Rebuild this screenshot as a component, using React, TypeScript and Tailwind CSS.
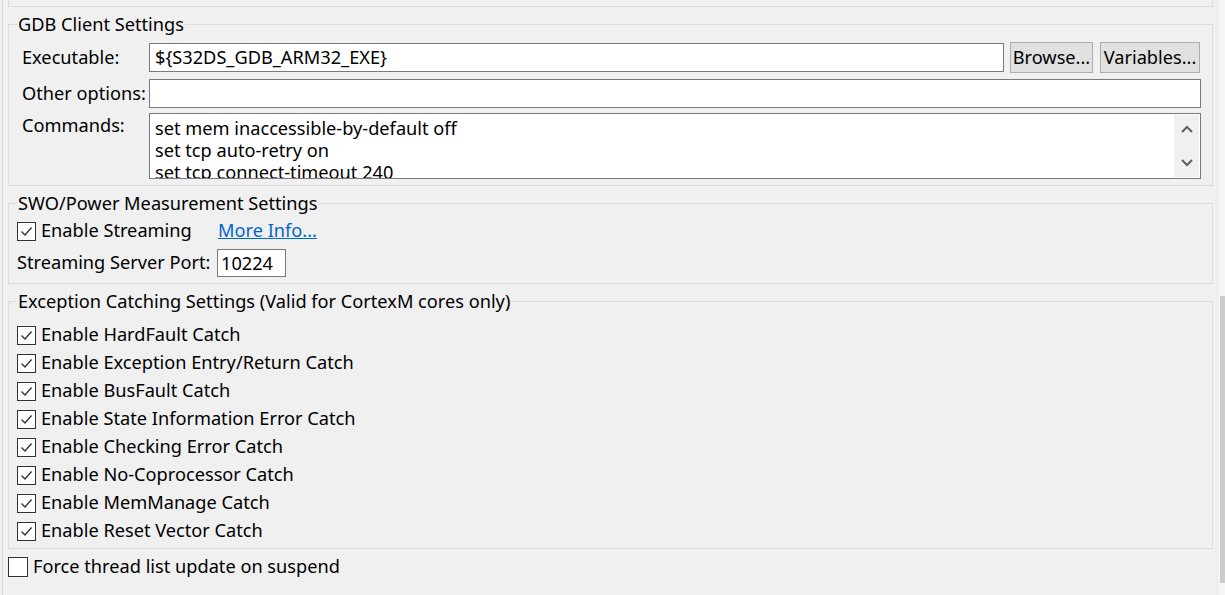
import React from "react";

const font = { fontFamily: '"Noto Sans", "Open Sans", sans-serif' };

function Check({ checked, size = "w-[19px] h-[19px]" }: { checked: boolean; size?: string }) {
  return (
    <span className={`${size} shrink-0 border border-[#333333] bg-white flex items-center justify-center`}>
      {checked && (
        <svg width="13" height="11" viewBox="0 0 13 11" fill="none">
          <path d="M1.5 5.5 L5 9 L11.5 1.5" stroke="#333333" strokeWidth="1.4" />
        </svg>
      )}
    </span>
  );
}

function Group({ title, children, className }: { title: string; children: React.ReactNode; className?: string }) {
  return (
    <fieldset className={`border border-[#dcdcdc] px-[8px] ${className ?? ""}`}>
      <legend className="px-[1px] h-[22px] leading-[22px] text-black">{title}</legend>
      {children}
    </fieldset>
  );
}

const catches = [
  "Enable HardFault Catch",
  "Enable Exception Entry/Return Catch",
  "Enable BusFault Catch",
  "Enable State Information Error Catch",
  "Enable Checking Error Catch",
  "Enable No-Coprocessor Catch",
  "Enable MemManage Catch",
  "Enable Reset Vector Catch",
];

export default function App() {
  return (
    <div className="w-[1225px] h-[595px] overflow-hidden bg-[#f0f0f0] flex text-[18.2px] text-black" style={font}>
      <div className="w-[2px] shrink-0" />
      <div className="w-[1px] shrink-0 bg-[#d9d9d9]" />
      <div className="flex-1 flex flex-col pl-[5px] pr-[6px]">
        <div className="h-[7px] border-x border-b border-[#dcdcdc]" />

        <Group title="GDB Client Settings" className="mt-[6px] pb-[6px]">
          <div className="flex flex-col pt-[7px]">
            <div className="flex items-center h-[31px]">
              <span className="w-[132px] pl-[5px]">Executable:</span>
              <div className="flex-1 h-[29px] border border-[#7a7a7a] bg-white flex items-center px-[5px] leading-none">
                {"${S32DS_GDB_ARM32_EXE}"}
              </div>
              <button className="ml-[6px] w-[83px] h-[31px] bg-[#e1e1e1] border border-[#adadad] text-black leading-none">Browse...</button>
              <button className="ml-[7px] mr-[4px] w-[100px] h-[31px] bg-[#e1e1e1] border border-[#adadad] text-black leading-none">Variables...</button>
            </div>
            <div className="flex items-center h-[29px] mt-[6px]">
              <span className="w-[132px] pl-[5px]">Other options:</span>
              <div className="flex-1 mr-[3px] h-[29px] border border-[#7a7a7a] bg-white" />
            </div>
            <div className="flex h-[66px] mt-[5px]">
              <span className="w-[132px] pl-[5px] leading-[22px] pt-[1px]">Commands:</span>
              <div className="flex-1 mr-[3px] h-[66px] border border-[#7a7a7a] bg-white flex overflow-hidden">
                <div className="flex-1 pl-[5px] pt-[3px] leading-[22px] whitespace-nowrap">
                  <div>set mem inaccessible-by-default off</div>
                  <div>set tcp auto-retry on</div>
                  <div>set tcp connect-timeout 240</div>
                </div>
                <div className="w-[25px] mt-[1px] mb-[1px] mr-[1px] bg-[#f0f0f0] flex flex-col items-center justify-between py-[10px]">
                  <svg width="12" height="8" viewBox="0 0 12 8">
                    <path d="M1 7 L6 2 L11 7" stroke="#606060" strokeWidth="2" fill="none" />
                  </svg>
                  <svg width="12" height="8" viewBox="0 0 12 8">
                    <path d="M1 1 L6 6 L11 1" stroke="#606060" strokeWidth="2" fill="none" />
                  </svg>
                </div>
              </div>
            </div>
          </div>
        </Group>

        <Group title="SWO/Power Measurement Settings" className="mt-[6px] pb-[6px]">
          <div className="flex items-center h-[28px] mt-[3px]">
            <Check checked />
            <span className="ml-[5px] w-[177px]">Enable Streaming</span>
            <span className="text-[#0066cc] underline">More Info...</span>
          </div>
          <div className="flex items-center h-[28px] mt-[4px]">
            <span className="w-[200px]">Streaming Server Port:</span>
            <div className="w-[69px] h-[28px] border border-[#7a7a7a] bg-white flex items-center px-[3px] leading-none">10224</div>
          </div>
        </Group>

        <Group title="Exception Catching Settings (Valid for CortexM cores only)" className="mt-[6px] pb-[3px]">
          <div className="flex flex-col pt-[9px]">
            {catches.map((c) => (
              <div key={c} className="flex items-center h-[28px]">
                <Check checked />
                <span className="ml-[5px]">{c}</span>
              </div>
            ))}
          </div>
        </Group>

        <div className="flex items-center h-[28px] mt-[4px]">
          <Check checked={false} size="w-[20px] h-[20px]" />
          <span className="ml-[5px]">Force thread list update on suspend</span>
        </div>
      </div>
      <div className="w-[6px] shrink-0 bg-[#f6f6f6] flex flex-col">
        <div className="h-[296px]" />
        <div className="h-[287px] ml-[1px] bg-[#cdcdcd]" />
      </div>
    </div>
  );
}
